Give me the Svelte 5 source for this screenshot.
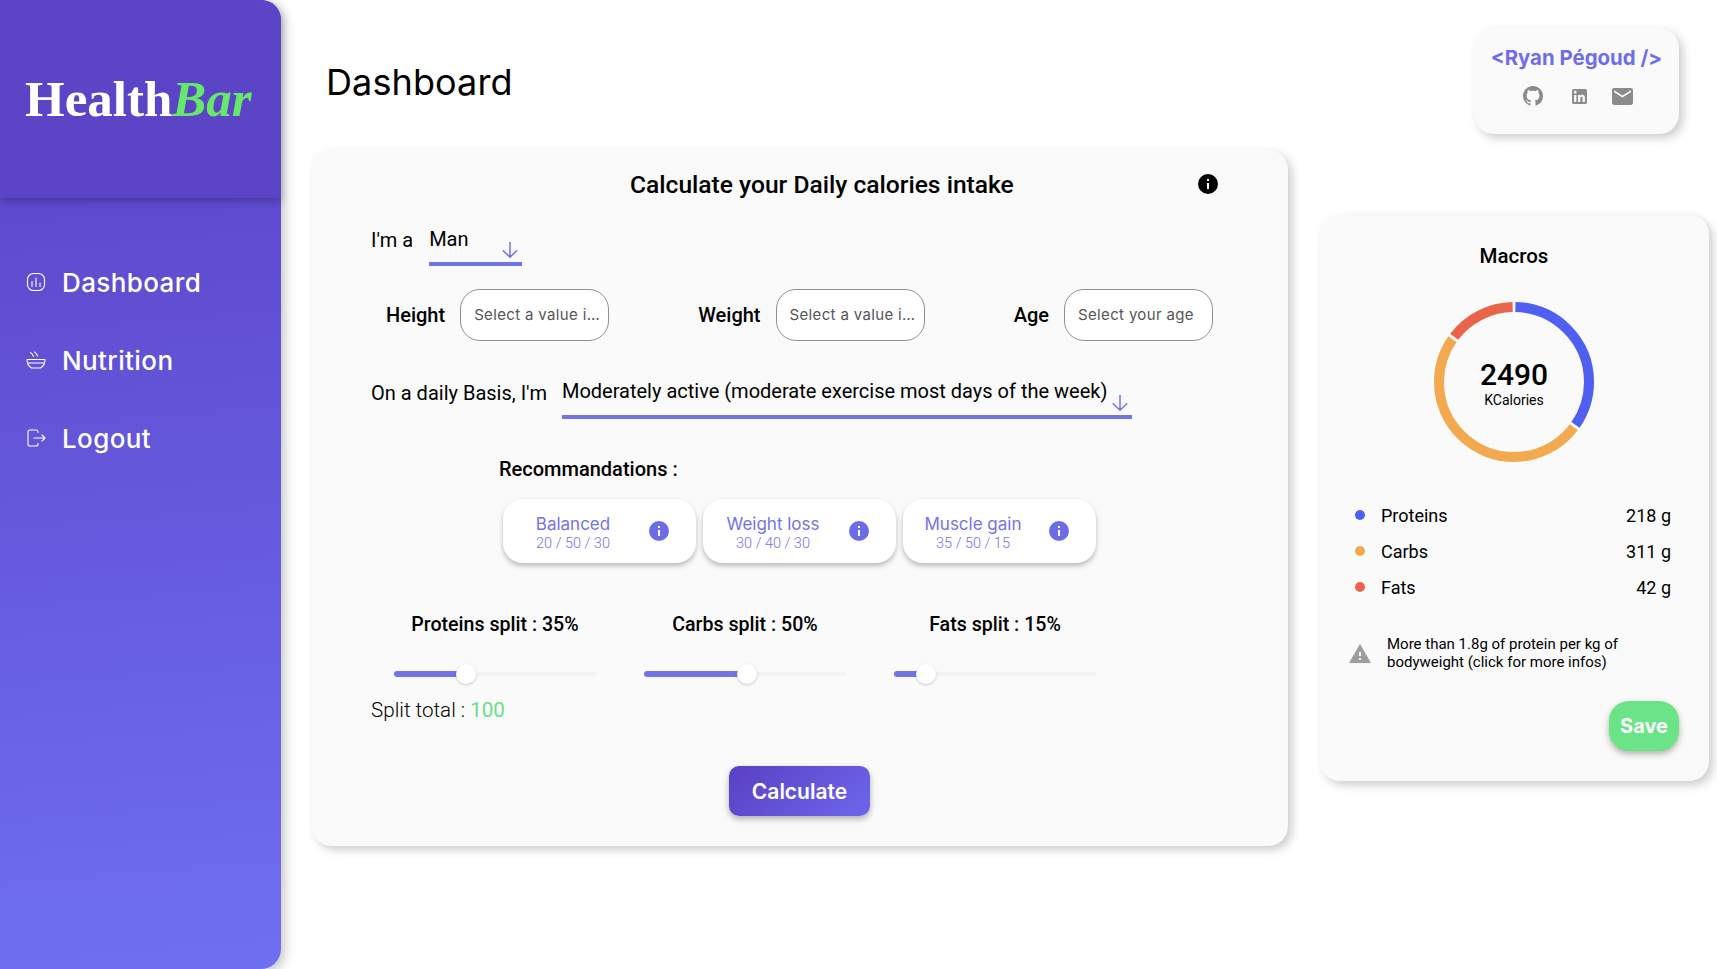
<script>
  const nav = ['Dashboard', 'Nutrition', 'Logout'];

  const plans = [
    { name: 'Balanced', split: '20 / 50 / 30' },
    { name: 'Weight loss', split: '30 / 40 / 30' },
    { name: 'Muscle gain', split: '35 / 50 / 15' }
  ];

  const splits = [
    { label: 'Proteins split', value: 35 },
    { label: 'Carbs split', value: 50 },
    { label: 'Fats split', value: 15 }
  ];

  const macros = [
    { name: 'Proteins', grams: '218 g', color: '#4f5ff2', share: 35 },
    { name: 'Carbs', grams: '311 g', color: '#f2a950', share: 50 },
    { name: 'Fats', grams: '42 g', color: '#e8654a', share: 15 }
  ];

  // ring segments, pathLength is 100 so shares can be used directly
  let offset = 0;
  const segments = macros.map((m) => {
    const seg = { color: m.color, dash: `${m.share - 0.6} ${100 - m.share + 0.6}`, start: -offset - 0.3 };
    offset += m.share;
    return seg;
  });
</script>

<div class="page">
  <aside class="sidebar">
    <div class="brand">
      <div class="logo">Health<em>Bar</em></div>
    </div>
    <nav class="nav">
      {#each nav as item}
        <div class="nav-item">
          <svg class="nav-icon" viewBox="0 0 20 20" fill="none" stroke="#fff" stroke-width="1.1" stroke-linecap="round" stroke-linejoin="round">
            {#if item === 'Dashboard'}
              <rect x="1.5" y="1.5" width="17" height="17" rx="6" />
              <path d="M6 9.5v5M10 6v8.500M14 11v3.500" />
            {:else if item === 'Nutrition'}
              <path d="M1 9.500h18c0 4-2 7-4.500 8.500h-9C3 16.500 1 13.500 1 9.500z" />
              <path d="M2 13h16" />
              <path d="M4.500 2.500c1 .7 2 1.300 3 4M8.500 2c1 .7 2 1.300 3 4" />
            {:else}
              <path d="M12 4.500V3.800A2 2 0 0 0 10 2H4a2 2 0 0 0-2 2v12a2 2 0 0 0 2 2h6a2 2 0 0 0 2-2v-.7" />
              <path d="M8 10h11M16 7l3 3-3 3" />
            {/if}
          </svg>
          <span>{item}</span>
        </div>
      {/each}
    </nav>
  </aside>

  <main class="main">
    <div class="left">
      <h1 class="page-title">Dashboard</h1>

      <section class="card calc">
        <div class="calc-head">
          <h2>Calculate your Daily calories intake</h2>
          <svg class="info" viewBox="2 2 20 20" fill="#000">
            <path d="M12 2a10 10 0 1 0 0 20 10 10 0 0 0 0-20zm1 15h-2v-6h2v6zm0-8h-2V7h2v2z" />
          </svg>
        </div>

        <div class="select-row gender-row">
          <span class="field-label">I'm a</span>
          <div class="select gender">
            <span>Man</span>
            <svg class="arrow" viewBox="0 0 16 16" fill="none" stroke="#7373e8" stroke-width="1.500">
              <path d="M8 0v15M.8 8.200 8 15.200l7.200-7" />
            </svg>
          </div>
        </div>

        <div class="inputs">
          <label class="input-group">
            <span>Height</span>
            <input type="text" placeholder="Select a value in cm" />
          </label>
          <label class="input-group">
            <span>Weight</span>
            <input type="text" placeholder="Select a value in kg" />
          </label>
          <label class="input-group">
            <span>Age</span>
            <input type="text" placeholder="Select your age" />
          </label>
        </div>

        <div class="select-row activity">
          <span class="field-label">On a daily Basis, I'm</span>
          <div class="select wide">
            <span>Moderately active (moderate exercise most days of the week)</span>
            <svg class="arrow" viewBox="0 0 16 16" fill="none" stroke="#7373e8" stroke-width="1.500">
              <path d="M8 0v15M.8 8.200 8 15.200l7.200-7" />
            </svg>
          </div>
        </div>

        <h3 class="rec-title">Recommandations :</h3>
        <div class="plans">
          {#each plans as plan}
            <div class="plan">
              <div class="plan-text">
                <span class="plan-name">{plan.name}</span>
                <span class="plan-split">{plan.split}</span>
              </div>
              <svg class="plan-info" viewBox="2 2 20 20" fill="#6c6ce8">
                <path d="M12 2a10 10 0 1 0 0 20 10 10 0 0 0 0-20zm1 15h-2v-6h2v6zm0-8h-2V7h2v2z" />
              </svg>
            </div>
          {/each}
        </div>

        <div class="splits">
          {#each splits as s}
            <div class="split">
              <div class="split-label">{s.label} : {s.value}%</div>
              <div class="slider">
                <div class="slider-fill" style="width: {s.value}%"></div>
                <div class="slider-thumb" style="left: {s.value}%"></div>
              </div>
            </div>
          {/each}
        </div>

        <div class="split-total">Split total : <span>100</span></div>

        <div class="calc-action">
          <button type="button" class="calculate">Calculate</button>
        </div>
      </section>
    </div>

    <div class="right">
      <div class="card profile">
        <div class="profile-name">&lt;Ryan Pégoud /&gt;</div>
        <div class="profile-links">
          <svg class="github" viewBox="0 0 16 16" fill="#8b8b8b">
            <path d="M8 0C3.580 0 0 3.580 0 8c0 3.540 2.290 6.530 5.470 7.590.4.070.55-.17.55-.38 0-.19-.01-.82-.01-1.490-2.010.37-2.530-.49-2.690-.94-.09-.23-.48-.94-.82-1.130-.28-.15-.68-.52-.01-.53.63-.01 1.080.58 1.230.82.72 1.210 1.870.87 2.330.66.070-.52.28-.87.51-1.070-1.780-.2-3.640-.89-3.640-3.950 0-.87.31-1.590.82-2.150-.08-.2-.36-1.020.08-2.120 0 0 .67-.21 2.200.82.64-.18 1.320-.27 2-.27s1.360.09 2 .27c1.530-1.040 2.200-.82 2.200-.82.44 1.100.16 1.920.08 2.120.51.56.82 1.270.82 2.150 0 3.070-1.870 3.750-3.650 3.950.29.25.54.73.54 1.480 0 1.070-.01 1.930-.01 2.200 0 .21.15.46.55.38A8.010 8.010 0 0 0 16 8c0-4.420-3.580-8-8-8z" />
          </svg>
          <svg class="linkedin" viewBox="3 3 18 18" fill="#8b8b8b">
            <path d="M19 3a2 2 0 0 1 2 2v14a2 2 0 0 1-2 2H5a2 2 0 0 1-2-2V5a2 2 0 0 1 2-2h14zm-.5 15.500v-5.300a3.260 3.260 0 0 0-3.260-3.260c-.85 0-1.840.52-2.320 1.300v-1.110h-2.790v8.370h2.790v-4.930c0-.77.62-1.400 1.390-1.400a1.400 1.400 0 0 1 1.400 1.400v4.930h2.790zM6.880 8.560a1.680 1.680 0 0 0 1.680-1.680c0-.93-.75-1.690-1.680-1.690a1.690 1.690 0 0 0-1.690 1.690c0 .93.76 1.680 1.690 1.680zm1.390 9.940v-8.370H5.500v8.370h2.770z" />
          </svg>
          <svg class="mail" viewBox="2 4 20 16" fill="#8b8b8b">
            <path d="M20 4H4c-1.100 0-2 .9-2 2v12c0 1.100.9 2 2 2h16c1.100 0 2-.9 2-2V6c0-1.100-.9-2-2-2zm0 4l-8 5-8-5V6l8 5 8-5v2z" />
          </svg>
        </div>
      </div>

      <section class="card macros">
        <h2>Macros</h2>
        <div class="ring">
          <svg viewBox="0 0 160 160">
            {#each segments as seg}
              <circle
                cx="80"
                cy="80"
                r="75"
                fill="none"
                stroke={seg.color}
                stroke-width="10"
                pathLength="100"
                stroke-dasharray={seg.dash}
                stroke-dashoffset={seg.start}
                transform="rotate(-90 80 80)"
              />
            {/each}
          </svg>
          <div class="ring-label">
            <strong>2490</strong>
            <span>KCalories</span>
          </div>
        </div>

        <ul class="legend">
          {#each macros as m}
            <li>
              <i style="background: {m.color}"></i>
              <span class="legend-name">{m.name}</span>
              <span>{m.grams}</span>
            </li>
          {/each}
        </ul>

        <div class="warning">
          <svg viewBox="1 2 22 19" fill="#9e9e9e">
            <path d="M1 21h22L12 2 1 21zm12-3h-2v-2h2v2zm0-4h-2v-4h2v4z" />
          </svg>
          <p>More than 1.8g of protein per kg of bodyweight (click for more infos)</p>
        </div>

        <div class="save-row">
          <button type="button" class="save">Save</button>
        </div>
      </section>
    </div>
  </main>
</div>

<style>
  :global(body) {
    margin: 0;
    background: #fff;
    font-family: 'Roboto', sans-serif;
    color: #000;
  }

  .page {
    display: flex;
    height: 969px;
    overflow: hidden;
  }

  .sidebar {
    width: 281px;
    flex-shrink: 0;
    border-radius: 0 20px 20px 0;
    background: linear-gradient(175deg, #5a40c4 0%, #6f6ff2 100%);
    box-shadow: 3px 3px 12px rgba(0, 0, 0, 0.25);
  }

  .brand {
    height: 198px;
    box-sizing: border-box;
    padding: 69px 0 0 25px;
    background: #5c44c7;
    border-top-right-radius: 20px;
    box-shadow: 0 3px 8px rgba(0, 0, 0, 0.25);
  }

  .logo {
    font-family: 'Liberation Serif', serif;
    font-weight: 700;
    font-size: 51px;
    line-height: 60px;
    color: #fff;
  }

  .logo em {
    color: #66e86a;
  }

  .nav {
    display: flex;
    flex-direction: column;
    gap: 38px;
    padding: 64px 0 0 26px;
  }

  .nav-item {
    display: flex;
    align-items: center;
    gap: 16px;
    height: 40px;
    color: #fff;
    font-family: 'Inter', sans-serif;
    font-weight: 500;
    font-size: 26px;
    letter-spacing: 0.4px;
  }

  .nav-icon {
    width: 20px;
    height: 20px;
  }

  .main {
    flex: 1;
    display: grid;
    grid-template-columns: 976px 389px;
    column-gap: 32px;
    align-items: start;
    padding-left: 31px;
  }

  .left {
    padding-top: 61px;
  }

  .page-title {
    margin: 0 0 47px 14px;
    font-family: 'Inter', sans-serif;
    font-weight: 400;
    font-size: 36px;
    line-height: 42px;
    letter-spacing: 0.1px;
  }

  .card {
    background: #fafafa;
    border-radius: 20px;
    box-shadow: 4px 4px 10px rgba(0, 0, 0, 0.2);
  }

  .calc {
    padding: 20px 70px 30px 59px;
  }

  .calc-head {
    display: flex;
    align-items: center;
    justify-content: space-between;
    height: 28px;
    padding-left: 259px;
  }

  .calc-head h2 {
    margin: 0;
    font-weight: 500;
    font-size: 24.6px;
  }

  .info {
    width: 20px;
    height: 20px;
  }

  .select-row {
    display: flex;
    gap: 15px;
    margin-top: 26px;
    font-size: 20px;
    line-height: 30px;
  }

  .gender-row {
    gap: 16px;
  }

  .field-label {
    padding-top: 1px;
  }

  .select {
    display: flex;
    justify-content: space-between;
    box-sizing: border-box;
    height: 42px;
    padding-right: 4px;
    border-bottom: 4px solid #7373e8;
  }

  .gender {
    width: 93px;
  }

  .wide {
    width: 570px;
  }

  .wide span {
    margin-top: -1px;
  }

  .arrow {
    align-self: flex-end;
    width: 16px;
    height: 16px;
    margin-bottom: 4px;
  }

  .inputs {
    display: flex;
    justify-content: space-between;
    margin-top: 23px;
    padding: 0 5px 0 15px;
  }

  .input-group {
    display: flex;
    align-items: center;
    gap: 15px;
    font-weight: 500;
    font-size: 20px;
  }

  .input-group input {
    width: 149px;
    height: 52px;
    box-sizing: border-box;
    padding: 0 7px 2px 13px;
    border: 1px solid #8f8f8f;
    border-radius: 20px;
    background: #fff;
    font-family: 'Inter', sans-serif;
    font-size: 15px;
    letter-spacing: 0.35px;
    text-overflow: ellipsis;
  }

  .input-group input::placeholder {
    color: #555;
    opacity: 1;
  }

  .activity {
    margin-top: 36px;
  }

  .rec-title {
    margin: 36px 0 16px 128px;
    font-weight: 500;
    font-size: 20px;
    line-height: 28px;
  }

  .plans {
    display: flex;
    gap: 7px;
    margin-left: 132px;
  }

  .plan {
    display: flex;
    align-items: center;
    gap: 6px;
    width: 193px;
    height: 64px;
    border-radius: 20px;
    background: #fff;
    box-shadow: 0 3px 5px rgba(0, 0, 0, 0.25);
  }

  .plan-text {
    display: flex;
    flex-direction: column;
    align-items: center;
    width: 140px;
    padding-top: 4px;
    color: #7373e8;
  }

  .plan-name {
    font-family: 'Inter', sans-serif;
    font-size: 17px;
    line-height: 21px;
  }

  .plan-split {
    font-weight: 300;
    font-size: 14.5px;
    line-height: 17px;
  }

  .plan-info {
    width: 20px;
    height: 20px;
  }

  .splits {
    display: grid;
    grid-template-columns: repeat(3, 202px);
    column-gap: 48px;
    margin: 48px 0 0 23px;
  }

  .split-label {
    font-weight: 500;
    font-size: 19.6px;
    line-height: 28px;
    text-align: center;
    white-space: nowrap;
  }

  .slider {
    position: relative;
    height: 20px;
    margin-top: 25px;
    background: linear-gradient(#f3f3f3, #f3f3f3) center / 100% 4px no-repeat;
  }

  .slider-fill {
    position: absolute;
    top: 7px;
    left: 0;
    height: 6px;
    border-radius: 3px;
    background: #7373e8;
  }

  .slider-thumb {
    position: absolute;
    top: 0;
    width: 20px;
    height: 20px;
    margin-left: -8.5px;
    border-radius: 50%;
    background: #fff;
    box-shadow: 0 1px 3px rgba(0, 0, 0, 0.2);
  }

  .split-total {
    margin-top: 12px;
    font-weight: 300;
    font-size: 20.6px;
    line-height: 28px;
  }

  .split-total span {
    color: #6bde8a;
    font-weight: 400;
  }

  .calc-action {
    display: flex;
    justify-content: center;
    margin-top: 42px;
    padding-left: 10px;
  }

  .calculate {
    width: 141px;
    height: 50px;
    border: none;
    border-radius: 10px;
    background: linear-gradient(135deg, #5a40c4, #6c66ea);
    box-shadow: 0 3px 6px rgba(0, 0, 0, 0.3);
    color: #fff;
    font-family: 'Inter', sans-serif;
    font-weight: 600;
    font-size: 21px;
  }

  .right {
    display: flex;
    flex-direction: column;
    padding-top: 28px;
  }

  .profile {
    align-self: flex-end;
    box-sizing: border-box;
    width: 205px;
    height: 106px;
    margin: 0 30px 81px 0;
    padding-top: 16px;
  }

  .profile-name {
    font-family: 'Inter', sans-serif;
    font-weight: 700;
    font-size: 20.4px;
    line-height: 28px;
    text-align: center;
    color: #6e6ee6;
    white-space: nowrap;
  }

  .profile-links {
    display: flex;
    align-items: center;
    justify-content: center;
    gap: 27px;
    height: 24px;
    margin-top: 12px;
    padding-left: 3px;
  }

  .github {
    width: 20px;
    height: 20px;
  }

  .linkedin {
    width: 15px;
    height: 15px;
    margin-left: 2px;
    margin-right: -2px;
  }

  .mail {
    width: 21px;
    height: 17px;
  }

  .macros {
    padding: 27px 30px 30px 29px;
  }

  .macros h2 {
    margin: 0;
    font-weight: 500;
    font-size: 20.5px;
    line-height: 28px;
    text-align: center;
  }

  .ring {
    position: relative;
    width: 160px;
    height: 160px;
    margin: 32px auto 0;
  }

  .ring svg {
    display: block;
    width: 160px;
    height: 160px;
  }

  .ring-label {
    position: absolute;
    inset: 0;
    display: flex;
    flex-direction: column;
    align-items: center;
    padding-top: 55px;
    box-sizing: border-box;
  }

  .ring-label strong {
    font-weight: 500;
    font-size: 30px;
    line-height: 35px;
  }

  .ring-label span {
    font-size: 14px;
    line-height: 16px;
  }

  .legend {
    list-style: none;
    margin: 35px 0 0;
    padding: 0 8px 0 6px;
  }

  .legend li {
    display: flex;
    align-items: center;
    height: 36px;
    font-size: 18px;
  }

  .legend i {
    width: 10px;
    height: 10px;
    margin-right: 16px;
    border-radius: 50%;
  }

  .legend-name {
    flex: 1;
  }

  .warning {
    display: flex;
    align-items: center;
    gap: 16px;
    margin-top: 30px;
  }

  .warning svg {
    width: 22px;
    height: 19px;
    flex-shrink: 0;
  }

  .warning p {
    margin: 0;
    font-size: 15px;
    line-height: 18px;
    width: 250px;
  }

  .save-row {
    display: flex;
    justify-content: flex-end;
    margin-top: 30px;
  }

  .save {
    width: 70px;
    height: 50px;
    border: none;
    border-radius: 20px;
    background: #6be387;
    box-shadow: 0 3px 6px rgba(0, 0, 0, 0.3);
    color: #fff;
    font-family: 'Inter', sans-serif;
    font-weight: 700;
    font-size: 20px;
  }
</style>
